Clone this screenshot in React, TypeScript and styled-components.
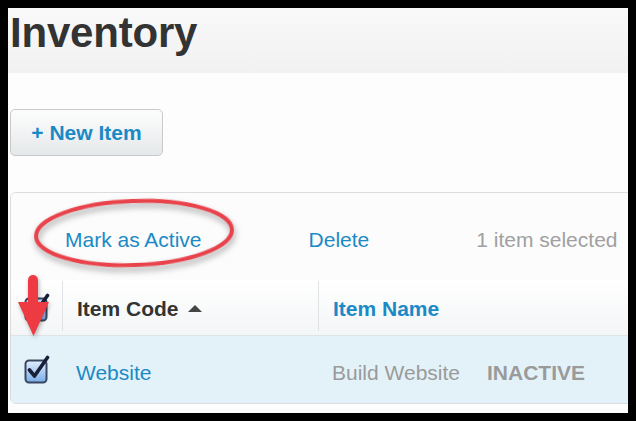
import styled, { createGlobalStyle } from 'styled-components';

const GlobalStyle = createGlobalStyle`
  html, body {
    margin: 0;
    padding: 0;
    background: #000;
  }
  * {
    box-sizing: border-box;
  }
`;

const Frame = styled.div`
  height: 100vh;
  padding: 8px;
  background: #000;
  font-family: 'Liberation Sans', Arial, sans-serif;
`;

const Page = styled.div`
  position: relative;
  height: 100%;
  display: flex;
  flex-direction: column;
  background: #fdfdfd;
  overflow: hidden;
`;

const Header = styled.header`
  height: 65px;
  flex-shrink: 0;
  padding: 4px 0 0 2px;
  background: linear-gradient(to bottom, #f9f9f9, #f1f1f1);
`;

const Title = styled.h1`
  margin: 0;
  font-size: 42px;
  line-height: 1;
  font-weight: 700;
  letter-spacing: -0.2px;
  color: #333;
`;

const Toolbar = styled.div`
  padding: 36px 0 0 2px;
`;

const NewButton = styled.button`
  width: 153px;
  height: 47px;
  padding: 0;
  border: 1px solid #c9c9c9;
  border-radius: 5px;
  background: linear-gradient(to bottom, #fdfdfd, #e5e8ea);
  color: #1a8ac6;
  font-family: inherit;
  font-size: 21px;
  font-weight: 700;
`;

const Panel = styled.section`
  margin: 36px -20px 0 2px;
  border: 1px solid #dcdcdc;
  border-radius: 6px 0 0 6px;
  overflow: hidden;
`;

const ActionBar = styled.div`
  display: flex;
  align-items: center;
  height: 87px;
  padding-top: 6px;
  background: #fcfcfc;
`;

const Action = styled.span<{ $muted?: boolean }>`
  padding: 0 53px 0 54px;
  font-size: 21px;
  color: ${(p) => (p.$muted ? '#a0a0a0' : '#1a8ac6')};
  white-space: nowrap;
`;

const Divider = styled.span`
  width: 1px;
  height: 32px;
  background: #dedede;
`;

const Row = styled.div<{ $head?: boolean }>`
  display: grid;
  grid-template-columns: 51px 256px 1fr;
  height: ${(p) => (p.$head ? '56px' : '67px')};
  background: ${(p) =>
    p.$head ? 'linear-gradient(to bottom, #ffffff, #f3f5f6)' : '#e3f2f9'};
  border-bottom: ${(p) => (p.$head ? '1px solid #dde4e8' : 'none')};
`;

const Cell = styled.div<{ $divided?: boolean; $center?: boolean }>`
  display: flex;
  align-items: center;
  justify-content: ${(p) => (p.$center ? 'center' : 'flex-start')};
  padding-left: ${(p) => (p.$center ? '0' : '14px')};
  padding-top: ${(p) => (p.$center ? '0' : '6px')};
  border-left: ${(p) => (p.$divided ? '1px solid #e0e3e5' : 'none')};
  margin: ${(p) => (p.$divided ? '1px 0 4px' : '0')};
  white-space: nowrap;
`;

const HeadLabel = styled.span<{ $link?: boolean }>`
  font-size: 21px;
  font-weight: 700;
  color: ${(p) => (p.$link ? '#1a8ac6' : '#333')};
`;

const SortArrow = styled.span`
  margin: 0 0 2px 9px;
  width: 0;
  height: 0;
  border-left: 7px solid transparent;
  border-right: 7px solid transparent;
  border-bottom: 7px solid #444;
`;

const CellText = styled.span<{ $tone: 'link' | 'muted' | 'status' }>`
  font-size: 21px;
  font-weight: ${(p) => (p.$tone === 'status' ? 700 : 400)};
  color: ${(p) => (p.$tone === 'link' ? '#1a8ac6' : '#9a9a9a')};
  margin-left: ${(p) => (p.$tone === 'status' ? '27px' : '0')};
`;

const CheckboxSvg = styled.svg`
  display: block;
  margin-left: 2px;
`;

const Callout = styled.svg`
  position: absolute;
  left: 14px;
  top: 184px;
  overflow: visible;
  transform: rotate(-2deg);
  filter: drop-shadow(1px 4px 3px rgba(0, 0, 0, 0.35));
`;

const Pointer = styled.svg`
  position: absolute;
  left: 9px;
  top: 264px;
  overflow: visible;
  filter: drop-shadow(1px 2px 2px rgba(0, 0, 0, 0.3));
`;

function Checkbox({ id }: { id: string }) {
  return (
    <CheckboxSvg width="27" height="29" viewBox="0 0 27 29">
      <defs>
        <linearGradient id={id} x1="0" y1="0" x2="0" y2="1">
          <stop offset="0" stopColor="#e2efff" />
          <stop offset="1" stopColor="#78ace6" />
        </linearGradient>
      </defs>
      <rect x="1.5" y="5.5" width="21" height="22" rx="3.5" fill={`url(#${id})`} stroke="#3a4660" strokeWidth="2" />
      <path d="M5.5 15 L10.5 21 L23.5 2.5" fill="none" stroke="#172038" strokeWidth="3.6" strokeLinecap="round" strokeLinejoin="round" />
    </CheckboxSvg>
  );
}

export default function App() {
  return (
    <>
      <GlobalStyle />
      <Frame>
        <Page>
          <Header>
            <Title>Inventory</Title>
          </Header>

          <Toolbar>
            <NewButton>+ New Item</NewButton>
          </Toolbar>

          <Panel>
            <ActionBar>
              <Action>Mark as Active</Action>
              <Divider />
              <Action>Delete</Action>
              <Divider />
              <Action $muted>1 item selected</Action>
            </ActionBar>

            <Row $head>
              <Cell $center>
                <Checkbox id="cb-head" />
              </Cell>
              <Cell $divided>
                <HeadLabel>Item Code</HeadLabel>
                <SortArrow />
              </Cell>
              <Cell $divided>
                <HeadLabel $link>Item Name</HeadLabel>
              </Cell>
            </Row>

            <Row>
              <Cell $center>
                <Checkbox id="cb-row" />
              </Cell>
              <Cell>
                <CellText $tone="link">Website</CellText>
              </Cell>
              <Cell>
                <CellText $tone="muted">Build Website</CellText>
                <CellText $tone="status">INACTIVE</CellText>
              </Cell>
            </Row>
          </Panel>

          <Callout width="224" height="82" viewBox="0 0 224 82">
            <ellipse cx="112" cy="41" rx="98" ry="32" fill="none" stroke="#e9424a" strokeWidth="4" />
          </Callout>

          <Pointer width="36" height="68" viewBox="0 0 36 68">
            <rect x="11" y="3" width="10" height="34" rx="5" fill="#ee3a43" />
            <polygon points="1,30 32,30 16.5,64" fill="#ee3a43" />
          </Pointer>
        </Page>
      </Frame>
    </>
  );
}
